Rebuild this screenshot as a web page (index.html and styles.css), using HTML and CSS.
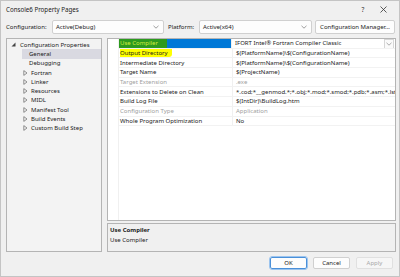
FILE: index.html
```html
<!DOCTYPE html>
<html lang="en">
<head>
    <meta charset="UTF-8">
    <title>Console6 Property Pages</title>
    <link rel="stylesheet" href="styles.css">
</head>
<body>
    <div class="window">
        <div class="titlebar">
            <span class="title">Console6 Property Pages</span>
            <span class="title-btn">?</span>
            <span class="title-btn close">
                <svg width="7" height="7" viewBox="0 0 7 7"><path d="M0.5 0.5 L6.5 6.5 M6.5 0.5 L0.5 6.5" stroke="#333" stroke-width="0.8"/></svg>
            </span>
        </div>

        <div class="config-row">
            <span class="label cfg-label">Configuration:</span>
            <div class="select cfg-select">
                <span>Active(Debug)</span>
                <svg class="chev" width="6" height="4" viewBox="0 0 6 4"><path d="M0.5 0.8 L3 3.2 L5.5 0.8" fill="none" stroke="#777" stroke-width="0.7"/></svg>
            </div>
            <span class="label plat-label">Platform:</span>
            <div class="select plat-select">
                <span>Active(x64)</span>
                <svg class="chev" width="6" height="4" viewBox="0 0 6 4"><path d="M0.5 0.8 L3 3.2 L5.5 0.8" fill="none" stroke="#777" stroke-width="0.7"/></svg>
            </div>
            <button class="btn mgr-btn">Configuration Manager...</button>
        </div>

        <div class="main">
            <div class="tree">
                <div class="tree-item root">
                    <svg class="arrow" width="5" height="5" viewBox="0 0 5 5"><path d="M4.5 0.5 L4.5 4.5 L0.5 4.5 Z" fill="#444"/></svg>
                    <span>Configuration Properties</span>
                </div>
                <div class="tree-item leaf selected"><span>General</span></div>
                <div class="tree-item leaf"><span>Debugging</span></div>
                <div class="tree-item branch"><svg class="arrow" width="5" height="6" viewBox="0 0 5 6"><path d="M0.8 0.6 L4 3 L0.8 5.4 Z" fill="none" stroke="#666" stroke-width="0.7"/></svg><span>Fortran</span></div>
                <div class="tree-item branch"><svg class="arrow" width="5" height="6" viewBox="0 0 5 6"><path d="M0.8 0.6 L4 3 L0.8 5.4 Z" fill="none" stroke="#666" stroke-width="0.7"/></svg><span>Linker</span></div>
                <div class="tree-item branch"><svg class="arrow" width="5" height="6" viewBox="0 0 5 6"><path d="M0.8 0.6 L4 3 L0.8 5.4 Z" fill="none" stroke="#666" stroke-width="0.7"/></svg><span>Resources</span></div>
                <div class="tree-item branch"><svg class="arrow" width="5" height="6" viewBox="0 0 5 6"><path d="M0.8 0.6 L4 3 L0.8 5.4 Z" fill="none" stroke="#666" stroke-width="0.7"/></svg><span>MIDL</span></div>
                <div class="tree-item branch"><svg class="arrow" width="5" height="6" viewBox="0 0 5 6"><path d="M0.8 0.6 L4 3 L0.8 5.4 Z" fill="none" stroke="#666" stroke-width="0.7"/></svg><span>Manifest Tool</span></div>
                <div class="tree-item branch"><svg class="arrow" width="5" height="6" viewBox="0 0 5 6"><path d="M0.8 0.6 L4 3 L0.8 5.4 Z" fill="none" stroke="#666" stroke-width="0.7"/></svg><span>Build Events</span></div>
                <div class="tree-item branch"><svg class="arrow" width="5" height="6" viewBox="0 0 5 6"><path d="M0.8 0.6 L4 3 L0.8 5.4 Z" fill="none" stroke="#666" stroke-width="0.7"/></svg><span>Custom Build Step</span></div>
            </div>

            <div class="right">
                <div class="grid">
                    <div class="gutter"></div>
                    <div class="rows">
                        <div class="row active">
                            <div class="name"><span class="hl-green">Use Compiler</span></div>
                            <div class="value">
                                <span>IFORT Intel® Fortran Compiler Classic</span>
                                <span class="drop"><svg width="6" height="4" viewBox="0 0 6 4"><path d="M0.5 0.8 L3 3.2 L5.5 0.8" fill="none" stroke="#888" stroke-width="0.7"/></svg></span>
                            </div>
                        </div>
                        <div class="row">
                            <div class="name"><span class="hl-yellow">Output Directory</span></div>
                            <div class="value">$(PlatformName)\$(ConfigurationName)</div>
                        </div>
                        <div class="row">
                            <div class="name">Intermediate Directory</div>
                            <div class="value">$(PlatformName)\$(ConfigurationName)</div>
                        </div>
                        <div class="row">
                            <div class="name">Target Name</div>
                            <div class="value">$(ProjectName)</div>
                        </div>
                        <div class="row disabled">
                            <div class="name">Target Extension</div>
                            <div class="value">.exe</div>
                        </div>
                        <div class="row">
                            <div class="name">Extensions to Delete on Clean</div>
                            <div class="value">*.cod;*__genmod.*;*.obj;*.mod;*.smod;*.pdb;*.asm;*.lst;*.map;*.dyn;*.dpi;*.tmp;*.log;*.ilk;*.exe</div>
                        </div>
                        <div class="row">
                            <div class="name">Build Log File</div>
                            <div class="value">$(IntDir)\BuildLog.htm</div>
                        </div>
                        <div class="row disabled">
                            <div class="name">Configuration Type</div>
                            <div class="value">Application</div>
                        </div>
                        <div class="row">
                            <div class="name">Whole Program Optimization</div>
                            <div class="value">No</div>
                        </div>
                    </div>
                </div>
                <div class="desc">
                    <div class="desc-title">Use Compiler</div>
                    <div class="desc-text">Use Compiler</div>
                </div>
            </div>
        </div>

        <div class="footer">
            <button class="btn footer-btn ok">OK</button>
            <button class="btn footer-btn">Cancel</button>
            <button class="btn footer-btn apply">Apply</button>
        </div>
    </div>
</body>
</html>
```

FILE: styles.css
```css
body {
    margin: 0;
    padding: 0;
    background-color: #f0f0f0;
    font-family: "Noto Sans", "Open Sans", sans-serif;
    font-size: 6px;
    color: #1a1a1a;
}

.window {
    width: 400px;
    height: 277px;
    box-sizing: border-box;
    border: 1px solid #c4c4c4;
    background-color: #f0f0f0;
    display: flex;
    flex-direction: column;
    overflow: hidden;
}

.titlebar {
    height: 17px;
    display: flex;
    align-items: center;
    padding-left: 5px;
    padding-right: 6px;
}

.title {
    flex: 1;
    font-size: 6.2px;
    color: #222;
}

.title-btn {
    width: 20px;
    text-align: center;
    font-size: 6.5px;
    color: #333;
    display: flex;
    justify-content: center;
}

.config-row {
    height: 14px;
    margin-top: 2px;
    display: flex;
    align-items: center;
    padding-left: 5px;
}

.label {
    font-size: 6px;
}

.cfg-label {
    width: 46px;
}

.plat-label {
    width: 31px;
    margin-left: 4px;
}

.select {
    height: 14px;
    box-sizing: border-box;
    border: 1px solid #d0d0d0;
    border-radius: 2px;
    background-color: #fdfdfd;
    display: flex;
    align-items: center;
    justify-content: space-between;
    padding: 0 4px 0 3px;
}

.cfg-select {
    width: 112px;
}

.plat-select {
    width: 113px;
}

.btn {
    font-family: "Noto Sans", "Open Sans", sans-serif;
    font-size: 6px;
    color: #1a1a1a;
    background-color: #fdfdfd;
    border: 1px solid #d0d0d0;
    border-radius: 2px;
    padding: 0;
    height: 14px;
}

.mgr-btn {
    width: 80px;
    margin-left: 3px;
}

.main {
    height: 214px;
    margin-top: 4px;
    display: flex;
    padding-left: 5px;
    gap: 5px;
}

.tree {
    width: 96px;
    box-sizing: border-box;
    border: 1px solid #b4b4b4;
    background-color: #f3f3f3;
    padding-top: 1px;
}

.tree-item {
    height: 9.3px;
    display: flex;
    align-items: center;
    white-space: nowrap;
}

.tree-item.root {
    padding-left: 4px;
}

.tree-item.root .arrow {
    margin-right: 4px;
}

.tree-item.leaf {
    padding-left: 22px;
    margin-left: 15px;
    padding-left: 7px;
}

.tree-item.branch {
    padding-left: 16px;
}

.tree-item.branch .arrow {
    margin-right: 3px;
}

.tree-item.selected {
    background-color: #d9d9e1;
}

.right {
    width: 289px;
    display: flex;
    flex-direction: column;
    gap: 2px;
}

.grid {
    height: 183px;
    box-sizing: border-box;
    border: 1px solid #b4b4b4;
    background-color: #ffffff;
    display: flex;
}

.gutter {
    width: 10px;
    border-right: 1px solid #f0f0f0;
}

.rows {
    flex: 1;
    overflow: hidden;
}

.row {
    height: 9.7px;
    display: flex;
    border-bottom: 1px solid #f2f2f2;
    box-sizing: border-box;
}

.name {
    width: 112px;
    padding-left: 1px;
    display: flex;
    align-items: center;
    white-space: nowrap;
    border-right: 1px solid #f0f0f0;
}

.value {
    flex: 1;
    padding-left: 3px;
    display: flex;
    align-items: center;
    white-space: nowrap;
    overflow: hidden;
    position: relative;
}

.row.disabled {
    color: #a0a0a0;
}

.row.active .name {
    background-color: #0078d7;
    color: #ffffff;
    padding-left: 0;
}

.hl-green {
    background-color: #2d9a1e;
    color: #d6ec3c;
    height: 100%;
    display: flex;
    align-items: center;
    padding: 0 9px 0 1px;
}

.hl-yellow {
    background-color: #ffff00;
    height: 100%;
    display: flex;
    align-items: center;
    padding: 0 4px 0 0;
    border-radius: 0 0 3px 0;
}

.drop {
    position: absolute;
    right: 1px;
    top: 0;
    width: 8px;
    height: 8px;
    border: 1px solid #d6d6d6;
    background-color: #fafafa;
    display: flex;
    align-items: center;
    justify-content: center;
}

.desc {
    height: 29px;
    box-sizing: border-box;
    border: 1px solid #b4b4b4;
    background-color: #f0f0f0;
    padding: 2px 2px;
}

.desc-title {
    font-weight: bold;
    height: 9.5px;
}

.desc-text {
    height: 9.5px;
}

.footer {
    display: flex;
    justify-content: flex-end;
    gap: 6px;
    padding-right: 6px;
    margin-top: 5px;
}

.footer-btn {
    width: 37px;
    height: 12px;
}

.footer-btn.ok {
    border: 1px solid #4a90d9;
    outline: 0.5px solid #9cc4ee;
}

.footer-btn.apply {
    color: #a8a8a8;
    background-color: #f6f6f6;
    border-color: #e0e0e0;
}
```
